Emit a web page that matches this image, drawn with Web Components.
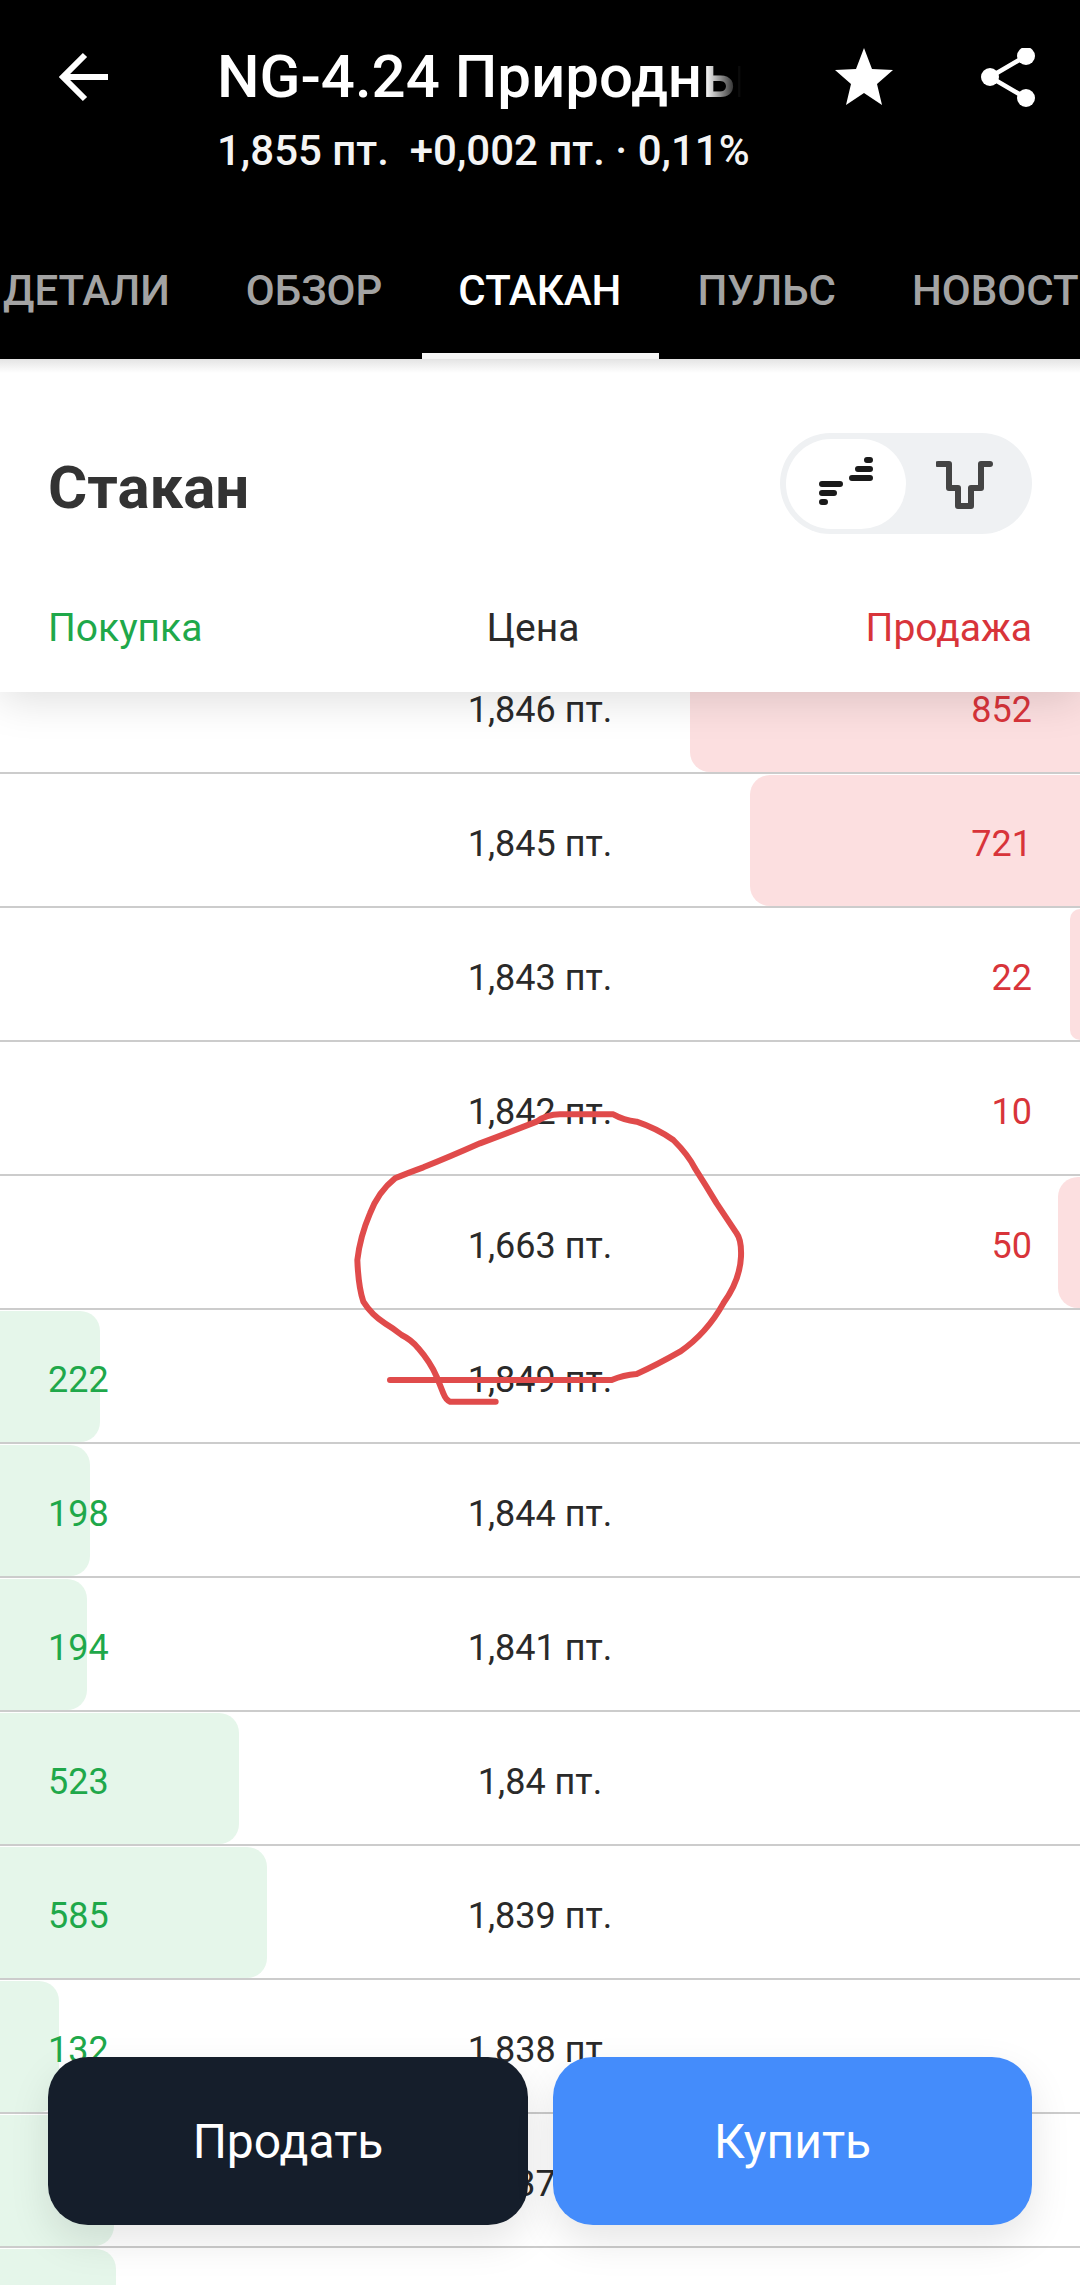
<!DOCTYPE html>
<html lang="ru">
<head>
<meta charset="utf-8">
<title>Стакан</title>
<style>
    html, body { margin: 0; padding: 0; background: #fff; }
    body { font-family: Roboto, "Liberation Sans", sans-serif; }
</style>
</head>
<body>
<order-screen></order-screen>

<script>
class QuoteHeader extends HTMLElement {
    constructor() {
        super();
        const shadowRoot = this.attachShadow({ mode: 'open' });
        shadowRoot.innerHTML = `
        <style>
            :host { display: block; height: 359px; background: #000; color: #fff; overflow: hidden; }
            .top { display: flex; height: 218px; box-sizing: border-box; padding: 42px 24px 0 56px; }
            .back { width: 58px; height: 58px; margin-top: 8px; margin-right: 103px; flex-shrink: 0; }
            .info { width: 523px; flex-shrink: 0; }
            .title {
                width: 620px;
                font-size: 60px; font-weight: 500; line-height: 70px; white-space: nowrap;
                -webkit-mask-image: linear-gradient(to right, #000 488px, transparent 524px);
                mask-image: linear-gradient(to right, #000 488px, transparent 524px);
            }
            .sub { font-size: 42px; font-weight: 500; line-height: 44px; white-space: pre; margin-top: 17px; color: #f4f4f4; }
            .actions { display: flex; gap: 84px; margin-left: 94px; margin-top: 6px; }
            .actions svg { display: block; flex-shrink: 0; }
            nav { display: flex; margin-left: -35px; height: 141px; white-space: nowrap; }
            nav a { position: relative; display: block; box-sizing: border-box; padding: 0 38px; height: 141px; line-height: 145px; font-size: 42px; font-weight: 500; color: #a3a3a3; flex-shrink: 0; }
            nav a.on { color: #fff; }
            nav a.on::after { content: ""; position: absolute; left: 2px; right: 0; bottom: 0; height: 6px; background: #fff; }
        </style>
        <div class="top">
            <svg class="back" viewBox="0 0 58 58"><path d="M52 27H8M29 5 7 27l22 22" fill="none" stroke="#fff" stroke-width="6"/></svg>
            <div class="info">
                <div class="title">NG-4.24 Природны</div>
                <div class="sub">1,855 пт.  +0,002 пт. · 0,11%</div>
            </div>
            <div class="actions">
                <svg width="60" height="60" viewBox="0 0 60 60"><path d="M30 0l8 21 21 1-16 14 5 21-18-12-18 12 5-21L1 22l21-1z" fill="#fff"/></svg>
                <svg width="60" height="60" viewBox="0 0 60 60"><path d="M48 8 12 29l36 21" fill="none" stroke="#fff" stroke-width="4.5"/><circle cx="48" cy="8" r="9" fill="#fff"/><circle cx="12" cy="29" r="9" fill="#fff"/><circle cx="48" cy="50" r="9" fill="#fff"/></svg>
            </div>
        </div>
        <nav>
            <a>ДЕТАЛИ</a><a>ОБЗОР</a><a class="on">СТАКАН</a><a>ПУЛЬС</a><a>НОВОСТ</a>
        </nav>
        `;
    }
}

class ViewToggle extends HTMLElement {
    constructor() {
        super();
        const shadowRoot = this.attachShadow({ mode: 'open' });
        shadowRoot.innerHTML = `
        <style>
            :host { display: flex; width: 252px; height: 101px; box-sizing: border-box; padding: 6px; background: #eff1f3; border-radius: 51px; }
            .item { display: flex; align-items: center; justify-content: center; height: 90px; }
            .active { width: 120px; background: #fff; border-radius: 45px; }
            .rest { flex: 1; }
        </style>
        <div class="item active">
            <svg width="66" height="54" viewBox="0 0 66 54" fill="none" stroke="#1a1a1a" stroke-width="6" stroke-linecap="round">
                <path d="M9 27H27M9 36H21M9 45H12"/>
                <path d="M39 21H57M45 12H57M54 3H57"/>
            </svg>
        </div>
        <div class="item rest">
            <svg width="60" height="52" viewBox="0 0 60 52" fill="none" stroke="#444" stroke-width="6" stroke-linecap="round" stroke-linejoin="round">
                <path d="M2 6H13V30H22V48H35V30H45V6H54"/>
            </svg>
        </div>
        `;
    }
}

class BookPanel extends HTMLElement {
    constructor() {
        super();
        const shadowRoot = this.attachShadow({ mode: 'open' });
        shadowRoot.innerHTML = `
        <style>
            :host { display: block; position: relative; z-index: 2; height: 333px; box-sizing: border-box; padding: 0 48px; background: #fff; box-shadow: 0 8px 40px rgba(0,0,0,.13); }
            :host::before { content: ""; position: absolute; left: 0; right: 0; top: 0; height: 14px; background: linear-gradient(#e4e4e4, #fff); }
            .head { position: relative; display: flex; align-items: center; justify-content: space-between; padding-top: 74px; height: 101px; }
            h2 { margin: 8px 0 0; font-size: 60px; font-weight: 700; color: #333; }
            .cols { display: grid; grid-template-columns: 1fr 1fr 1fr; margin-top: 72px; font-size: 39px; line-height: 44px; }
            .buy { color: #1fa84a; }
            .price { color: #2a2a2a; text-align: center; padding-right: 14px; }
            .sell { color: #d8343a; text-align: right; }
        </style>
        <div class="head">
            <h2>Стакан</h2>
            <view-toggle></view-toggle>
        </div>
        <div class="cols">
            <span class="buy">Покупка</span><span class="price">Цена</span><span class="sell">Продажа</span>
        </div>
        `;
    }
}

class BookRow extends HTMLElement {
    constructor() {
        super();
        const shadowRoot = this.attachShadow({ mode: 'open' });
        shadowRoot.innerHTML = `
        <style>
            :host { display: block; position: relative; height: 134px; box-sizing: border-box; border-bottom: 2px solid #ccc; }
            .bar { position: absolute; top: 1px; bottom: 0; }
            .bar.buy { left: 0; background: #e5f6ea; border-radius: 0 20px 20px 0; }
            .bar.sell { right: 0; background: #fcdfe0; border-radius: 20px 0 0 20px; }
            .cells { position: relative; display: grid; grid-template-columns: 1fr 1fr 1fr; align-items: center; height: 100%; padding: 7px 48px 0; box-sizing: border-box; font-size: 36px; }
            .buy-size { color: #1fa84a; }
            .price { color: #2a2a2a; text-align: center; white-space: nowrap; }
            .sell-size { color: #d8343a; text-align: right; }
        </style>
        <div class="bar" id="bar"></div>
        <div class="cells">
            <span class="buy-size" id="buy"></span>
            <span class="price" id="price"></span>
            <span class="sell-size" id="sell"></span>
        </div>
        `;
    }
    connectedCallback() {
        const side = this.getAttribute('side');
        const bar = this.shadowRoot.getElementById('bar');
        bar.classList.add(side);
        bar.style.width = this.getAttribute('bar') + 'px';
        this.shadowRoot.getElementById('price').textContent = this.getAttribute('price');
        this.shadowRoot.getElementById(side).textContent = this.getAttribute('size');
    }
}

class OrderScreen extends HTMLElement {
    constructor() {
        super();
        const rows = [
            ['sell', '852', '1,846 пт.', 390],
            ['sell', '721', '1,845 пт.', 330],
            ['sell', '22', '1,843 пт.', 10],
            ['sell', '10', '1,842 пт.', 0],
            ['sell', '50', '1,663 пт.', 22],
            ['buy', '222', '1,849 пт.', 100],
            ['buy', '198', '1,844 пт.', 90],
            ['buy', '194', '1,841 пт.', 87],
            ['buy', '523', '1,84 пт.', 239],
            ['buy', '585', '1,839 пт.', 267],
            ['buy', '132', '1,838 пт.', 59],
            ['buy', '', '1,837 пт.', 114],
            ['buy', '', '', 116],
        ];
        const shadowRoot = this.attachShadow({ mode: 'open' });
        shadowRoot.innerHTML = `
        <style>
            :host { display: block; position: relative; width: 1080px; height: 2285px; overflow: hidden; background: #fff; font-family: Roboto, "Liberation Sans", sans-serif; }
            .list { margin-top: -52px; }
            .scribble { position: absolute; left: 340px; top: 1090px; width: 420px; height: 340px; z-index: 1; }
            .actions { position: absolute; z-index: 3; left: 48px; right: 48px; top: 2057px; display: grid; grid-template-columns: 480px 479px; gap: 25px; }
            .actions button { height: 168px; border: 0; border-radius: 40px; font: 400 48px Roboto, "Liberation Sans", sans-serif; color: #fff; box-shadow: 0 16px 40px rgba(0,0,0,.1); padding: 0; }
            .sell-btn { background: #151e2b; }
            .buy-btn { background: #448cfb; }
        </style>
        <quote-header></quote-header>
        <book-panel></book-panel>
        <div class="list">
            ${rows.map(r => `<book-row side="${r[0]}" size="${r[1]}" price="${r[2]}" bar="${r[3]}"></book-row>`).join('')}
        </div>
        <svg class="scribble" viewBox="0 0 1260 1020" fill="none" stroke="#e04b4b" stroke-width="18" stroke-linecap="round" stroke-linejoin="round">
            <path d="M467 935H330Q318 930 310 910Q300 885 290 860Q270 815 235 775Q215 750 185 735Q160 715 135 700Q95 675 70 635Q55 590 52 510Q60 440 90 370Q115 305 165 265Q200 250 250 232Q330 200 420 160Q500 130 590 95Q620 73 660 73H820Q850 90 890 95Q950 115 1000 150Q1045 195 1065 235Q1100 290 1130 340Q1160 385 1190 430Q1205 450 1203 500Q1200 570 1150 640Q1100 730 1020 785Q950 825 890 852Q850 855 815 870H150"/>
        </svg>
        <div class="actions">
            <button class="sell-btn">Продать</button>
            <button class="buy-btn">Купить</button>
        </div>
        `;
    }
}

window.customElements.define('quote-header', QuoteHeader);
window.customElements.define('view-toggle', ViewToggle);
window.customElements.define('book-panel', BookPanel);
window.customElements.define('book-row', BookRow);
window.customElements.define('order-screen', OrderScreen);
</script>
</body>
</html>
